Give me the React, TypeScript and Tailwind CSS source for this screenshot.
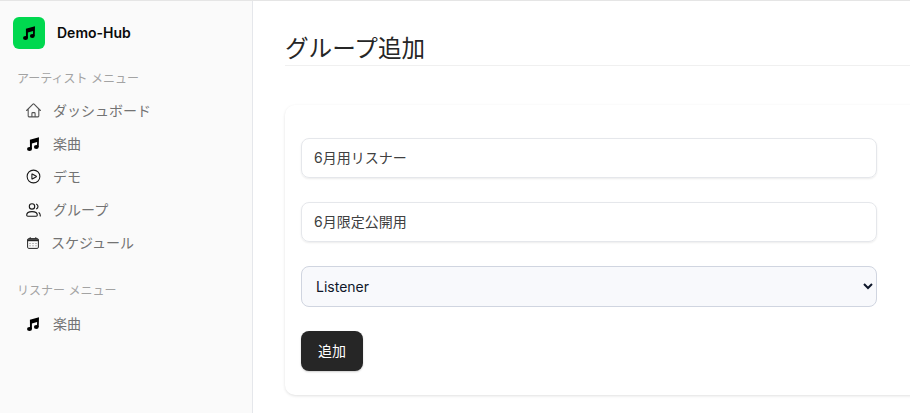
import { HiOutlineHome, HiOutlinePlayCircle } from "react-icons/hi2";

const font = { fontFamily: '"Inter","Noto Sans CJK JP",sans-serif' };

function Note({ className }: { className: string }) {
  return (
    <svg viewBox="0 0 12 14" className={className} fill="currentColor">
      <ellipse cx="2.5" cy="11.9" rx="2.5" ry="2" />
      <ellipse cx="9.3" cy="10" rx="2.4" ry="1.9" />
      <path d="M2.9 2.8 L12 0.2 L11.7 10 L10 10 L10.1 5 L4.9 6.6 L4.9 12 L3 12 Z" />
    </svg>
  );
}

function Calendar() {
  return (
    <svg viewBox="0 0 12 12" className="h-[12px] w-[12px] text-[#262626]" fill="none" stroke="currentColor">
      <rect x="0.6" y="1.6" width="10.8" height="9.8" rx="1.2" strokeWidth="1" />
      <path d="M0.6 3.2H11.4" strokeWidth="2" />
      <path d="M3.2 0.2V1.8M8.8 0.2V1.8" strokeWidth="1" />
      <path d="M2.5 6.5h1M5.5 6.5h1M8.5 6.5h1M2.5 8.8h1M5.5 8.8h1M8.5 8.8h1" strokeWidth="0.9" opacity="0.65" />
    </svg>
  );
}

function UsersIcon() {
  return (
    <svg viewBox="0 0 15 14" className="h-[14px] w-[15px] shrink-0 text-[#171717]" fill="none" stroke="currentColor" strokeWidth="1.1" strokeLinecap="round" strokeLinejoin="round">
      <circle cx="6" cy="3.4" r="2.7" />
      <path d="M0.7 12.1 C0.7 10 3 8.6 6 8.6 S11.3 10 11.3 12.1 C11.3 12.9 10.8 13.2 10.2 13.2 H1.8 C1.2 13.2 0.7 12.9 0.7 12.1 Z" />
      <path d="M10.6 1.2 A2.6 2.6 0 0 1 10.6 5.8" />
      <path d="M13 9.6 C13.9 10.4 14.3 11.4 14.3 12.9" />
    </svg>
  );
}

function Item({ icon, label, gap = "gap-[13px]" }: { icon: React.ReactNode; label: string; gap?: string }) {
  return (
    <div className={`flex h-[33px] items-center pl-[26px] text-[14px] text-[#737373] ${gap}`}>
      <span className="flex h-[16px] w-[14px] items-center justify-center">{icon}</span>
      <span>{label}</span>
    </div>
  );
}

export default function App() {
  return (
    <div className="flex h-[413px] w-[910px] overflow-hidden border-t border-[#e5e5e5] bg-white font-['Inter','Noto_Sans_CJK_JP',sans-serif]">
      <aside className="w-[253px] shrink-0 border-r border-[#e5e7eb] bg-[#fafafa]">
        <div className="flex items-center gap-3 pl-[13px] pt-[16px]">
          <div className="flex h-8 w-8 items-center justify-center rounded-[6px] bg-[#00d84f]">
            <Note className="h-[14px] w-[12px] text-black" />
          </div>
          <span className="pb-[2px] text-[14px] font-semibold text-[#0a0a0a]">Demo-Hub</span>
        </div>
        <div className="pb-[6px] pl-[17px] pt-[21px] text-[12px] leading-[18px] text-[#a3a3a3]">アーティスト メニュー</div>
        <Item icon={<HiOutlineHome className="h-[17px] w-[17px] shrink-0 text-[#525252]" />} label="ダッシュボード" />
        <Item icon={<Note className="h-[14px] w-[12px] shrink-0 text-black" />} label="楽曲" />
        <Item icon={<HiOutlinePlayCircle className="h-[17px] w-[17px] shrink-0 text-[#171717]" />} label="デモ" />
        <Item icon={<UsersIcon />} label="グループ" />
        <Item icon={<Calendar />} label="スケジュール" gap="gap-[11px]" />
        <div className="pb-[7px] pl-[17px] pt-[23px] text-[12px] leading-[18px] text-[#a3a3a3]">リスナー メニュー</div>
        <Item icon={<Note className="h-[14px] w-[12px] shrink-0 text-black" />} label="楽曲" />
      </aside>
      <main className="min-w-0 flex-1 pl-[32px]">
        <h1 className="mt-[30px] h-[35px] border-b border-[#f0f0f0] text-[23.6px] font-normal leading-[35px] text-[#262626]">グループ追加</h1>
        <div className="mt-[39px] h-[290px] w-[700px] rounded-[10px] bg-white p-4 shadow-[0_1px_3px_rgba(0,0,0,0.12)]">
          <div className="w-[576px] pt-[17px]">
            <input readOnly value="6月用リスナー" className="block h-10 w-full rounded-lg border border-[#e5e7eb] px-3 pb-[2px] text-[14px] text-[#404040] shadow-[0_1px_2px_rgba(0,0,0,0.08)] outline-none" />
            <input readOnly value="6月限定公開用" className="mt-6 block h-10 w-full rounded-lg border border-[#e5e7eb] px-3 pb-[2px] text-[14px] text-[#404040] shadow-[0_1px_2px_rgba(0,0,0,0.08)] outline-none" />
            <select defaultValue="Listener" style={font} className="mt-6 block h-[41px] w-full rounded-lg border border-[#d0d5e0] bg-[#f8f9fc] pl-[10px] pr-2 text-[14px] text-[#0f172a] outline-none">
              <option>Listener</option>
            </select>
            <button className="mt-6 block h-10 w-[62px] rounded-lg bg-[#262626] pb-[2px] text-[14px] text-white shadow-[0_1px_2px_rgba(0,0,0,0.2)]">追加</button>
          </div>
        </div>
      </main>
    </div>
  );
}
